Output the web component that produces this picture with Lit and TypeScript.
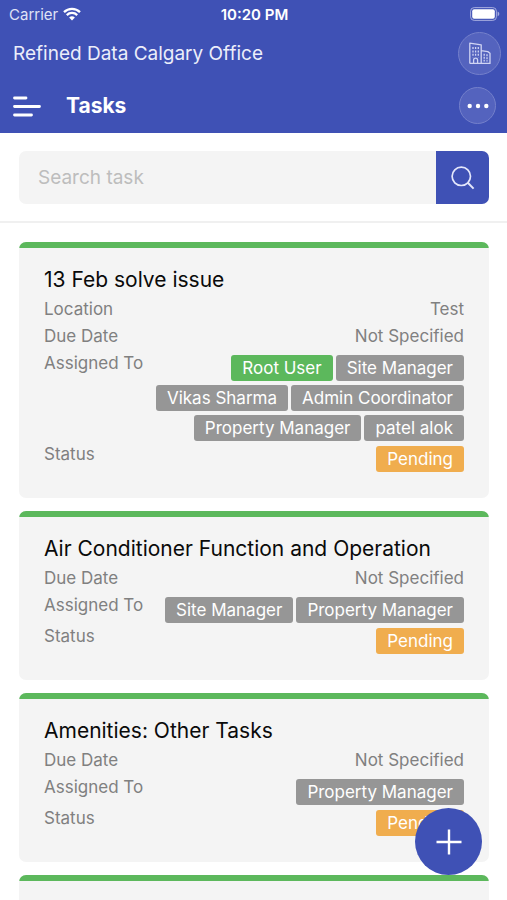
import { LitElement, html, css, svg, nothing } from "lit";
import { customElement, property } from "lit/decorators.js";
import { classMap } from "lit/directives/class-map.js";

interface Tag {
  text: string;
  tone: "green" | "grey" | "orange";
}

interface Task {
  title?: string;
  location?: string;
  due?: string;
  assigned?: Tag[];
  status?: string;
}

const grey = (text: string): Tag => ({ text, tone: "grey" });

const TASKS: Task[] = [
  {
    title: "13 Feb solve issue",
    location: "Test",
    due: "Not Specified",
    assigned: [
      { text: "Root User", tone: "green" },
      grey("Site Manager"),
      grey("Vikas Sharma"),
      grey("Admin Coordinator"),
      grey("Property Manager"),
      grey("patel alok"),
    ],
    status: "Pending",
  },
  {
    title: "Air Conditioner Function and Operation",
    due: "Not Specified",
    assigned: [grey("Site Manager"), grey("Property Manager")],
    status: "Pending",
  },
  {
    title: "Amenities: Other Tasks",
    due: "Not Specified",
    assigned: [grey("Property Manager")],
    status: "Pending",
  },
  {},
];

@customElement("task-card")
export class TaskCard extends LitElement {
  @property({ attribute: false }) task: Task = {};

  static styles = css`
    :host {
      display: block;
    }
    .card {
      box-sizing: border-box;
      min-height: 120px;
      padding: 0 25px 26px;
      border-radius: 7px;
      background: #f4f4f4;
      overflow: hidden;
    }
    .stripe {
      height: 6px;
      margin: 0 -25px 16px;
      background: #5cb85c;
    }
    .title {
      margin: 0;
      font-size: 21px;
      font-weight: 400;
      line-height: 32px;
      color: #0a0a0a;
    }
    .rows {
      margin: 0;
    }
    .row {
      display: flex;
      justify-content: space-between;
      font-size: 17px;
      line-height: 27px;
      color: #808080;
    }
    .label {
      flex: none;
    }
    .value {
      margin: 0;
    }
    .tags {
      display: flex;
      flex-wrap: wrap;
      justify-content: flex-end;
      gap: 4px 3px;
      padding-top: 5px;
    }
    .tag {
      padding: 0 11px;
      border-radius: 3px;
      line-height: 26px;
      color: #fff;
      background: #969696;
    }
    .green {
      background: #5cb85c;
    }
    .orange {
      background: #f0ad4e;
    }
  `;

  private textRow(label: string, value?: string) {
    return value
      ? html`<div class="row">
          <dt class="label">${label}</dt>
          <dd class="value">${value}</dd>
        </div>`
      : nothing;
  }

  private tagRow(label: string, tags?: Tag[]) {
    return tags
      ? html`<div class="row">
          <dt class="label">${label}</dt>
          <dd class="value tags">
            ${tags.map(
              (t) => html`<span class=${classMap({ tag: true, [t.tone]: true })}>${t.text}</span>`
            )}
          </dd>
        </div>`
      : nothing;
  }

  render() {
    const t = this.task;
    return html`<article class="card">
      <div class="stripe"></div>
      ${t.title ? html`<h2 class="title">${t.title}</h2>` : nothing}
      <dl class="rows">
        ${this.textRow("Location", t.location)} ${this.textRow("Due Date", t.due)}
        ${this.tagRow("Assigned To", t.assigned)}
        ${this.tagRow("Status", t.status ? [{ text: t.status, tone: "orange" }] : undefined)}
      </dl>
    </article>`;
  }
}

const wifiIcon = svg`<svg width="18" height="14" viewBox="0 0 18 14" fill="none" stroke="#fff" stroke-width="2.3" aria-hidden="true">
  <path d="M1 5.1a11.4 11.4 0 0 1 16 0M3.8 8.1a7.4 7.4 0 0 1 10.4 0" />
  <path d="M9 13.6 6.1 10.6a4.2 4.2 0 0 1 5.8 0Z" fill="#fff" stroke="none" />
</svg>`;

const batteryIcon = svg`<svg width="30" height="14" viewBox="0 0 30 14" aria-hidden="true">
  <rect x=".6" y=".6" width="25.8" height="12.8" rx="3.6" fill="none" stroke="#a5acdf" />
  <rect x="2.2" y="2.2" width="22.6" height="9.6" rx="2" fill="#fff" />
  <path d="M27.6 4.6c2.3.9 2.3 3.9 0 4.8Z" fill="#a5acdf" />
</svg>`;

const buildingIcon = svg`<svg width="24" height="24" viewBox="0 0 24 24" fill="none" stroke="#d0d4f3" stroke-width="1.3" stroke-linejoin="round" aria-hidden="true">
  <path d="M1.8 22.4V2.2L13.2 3.8V22.4M13.2 9.6l6.6 1 2.2 1.6v10.2H1.8" />
  <path d="M5.6 22.4v-3.2a2 2 0 0 1 4 0v3.2" />
  <path d="M5 6v10.4M7.6 6v10M10.3 6v10.4" stroke-dasharray="2 1.4" />
  <path d="M16.2 12.8v7.6M19 13.2v7.2" stroke-dasharray="2 1" />
</svg>`;

const searchIcon = svg`<svg width="24" height="24" viewBox="0 0 24 24" fill="none" stroke="#e4e7fb" stroke-width="1.7" aria-hidden="true">
  <circle cx="10.3" cy="10.3" r="9.2" />
  <path d="m16.8 16.8 5.8 5.8" stroke-width="2" />
</svg>`;

@customElement("app-root")
export class AppRoot extends LitElement {
  static styles = css`
    :host {
      display: flex;
      flex-direction: column;
      height: 100vh;
      overflow: hidden;
      background: #fff;
      font-family: Inter, "Liberation Sans", sans-serif;
    }
    button {
      display: flex;
      align-items: center;
      justify-content: center;
      flex: none;
      box-sizing: border-box;
      margin: 0;
      padding: 0;
      border: 0;
      background: none;
      color: #fff;
      cursor: pointer;
    }
    .header {
      flex: none;
      background: #3f51b5;
      color: #fff;
    }
    .status {
      display: grid;
      grid-template-columns: 1fr auto 1fr;
      align-items: center;
      height: 28px;
      padding: 0 7px 0 9px;
      font-size: 15px;
    }
    .carrier {
      display: flex;
      align-items: center;
      gap: 5px;
      color: #dfe2f5;
    }
    .clock {
      font-weight: 600;
    }
    .battery {
      display: flex;
      justify-content: flex-end;
    }
    .office {
      display: flex;
      align-items: center;
      justify-content: space-between;
      height: 50px;
      padding: 0 6px 0 13px;
      font-size: 19px;
      color: #eceefa;
    }
    .bar {
      display: flex;
      align-items: center;
      height: 55px;
      padding: 0 11px 0 13px;
    }
    .heading {
      flex: 1;
      margin: 0 0 0 25px;
      font-size: 21px;
      line-height: 28px;
      font-weight: 700;
    }
    .round {
      border: 1px solid #7480cb;
      border-radius: 50%;
      background: #5463be;
    }
    .site {
      width: 43px;
      height: 43px;
    }
    .more {
      width: 37px;
      height: 37px;
    }
    .search {
      display: flex;
      flex: none;
      padding: 18px 18px 17px 19px;
      border-bottom: 2px solid #f0f0f0;
    }
    .field {
      flex: 1;
      min-width: 0;
      box-sizing: border-box;
      height: 53px;
      margin: 0;
      padding: 0 19px;
      border: 0;
      border-radius: 7px 0 0 7px;
      background: #f4f4f4;
      font: inherit;
      font-size: 19px;
      color: #222;
      outline: none;
    }
    .field::placeholder {
      color: #bdbdbd;
      opacity: 1;
    }
    .go {
      width: 53px;
      height: 53px;
      border-radius: 0 7px 7px 0;
      background: #3f51b5;
    }
    .list {
      display: flex;
      flex-direction: column;
      flex: 1;
      gap: 13px;
      min-height: 0;
      padding: 19px 18px 0 19px;
      overflow-y: auto;
      scrollbar-width: none;
    }
    .item {
      flex: none;
    }
    .fab {
      position: fixed;
      right: 25px;
      bottom: 25px;
      width: 67px;
      height: 67px;
      border-radius: 50%;
      background: #3f51b5;
    }
  `;

  render() {
    return html`
      <header class="header">
        <div class="status">
          <span class="carrier">Carrier ${wifiIcon}</span>
          <span class="clock">10:20 PM</span>
          <span class="battery">${batteryIcon}</span>
        </div>
        <div class="office">
          <span>Refined Data Calgary Office</span>
          <button class="round site" aria-label="Change office">${buildingIcon}</button>
        </div>
        <div class="bar">
          <button aria-label="Menu">
            <svg width="28" height="22" viewBox="0 0 28 22" stroke="#fff" stroke-width="2.8" stroke-linecap="round" aria-hidden="true">
              <path d="M1.5 3H13M1.5 11.5H26.5M1.5 20H18.5" />
            </svg>
          </button>
          <h1 class="heading">Tasks</h1>
          <button class="round more" aria-label="More options">
            <svg width="22" height="6" viewBox="0 0 22 6" fill="#fff" aria-hidden="true">
              <circle cx="2.7" cy="3" r="2.2" />
              <circle cx="11" cy="3" r="2.2" />
              <circle cx="19.3" cy="3" r="2.2" />
            </svg>
          </button>
        </div>
      </header>
      <form class="search" role="search" @submit=${(e: Event) => e.preventDefault()}>
        <input class="field" type="text" placeholder="Search task" aria-label="Search task" />
        <button class="go" aria-label="Search">${searchIcon}</button>
      </form>
      <main class="list">
        ${TASKS.map((task) => html`<task-card class="item" .task=${task}></task-card>`)}
      </main>
      <button class="fab" aria-label="Add task">
        <svg width="26" height="26" viewBox="0 0 26 26" stroke="#fff" stroke-width="2.4" aria-hidden="true">
          <path d="M13 .5v25M.5 13h25" />
        </svg>
      </button>
    `;
  }
}
